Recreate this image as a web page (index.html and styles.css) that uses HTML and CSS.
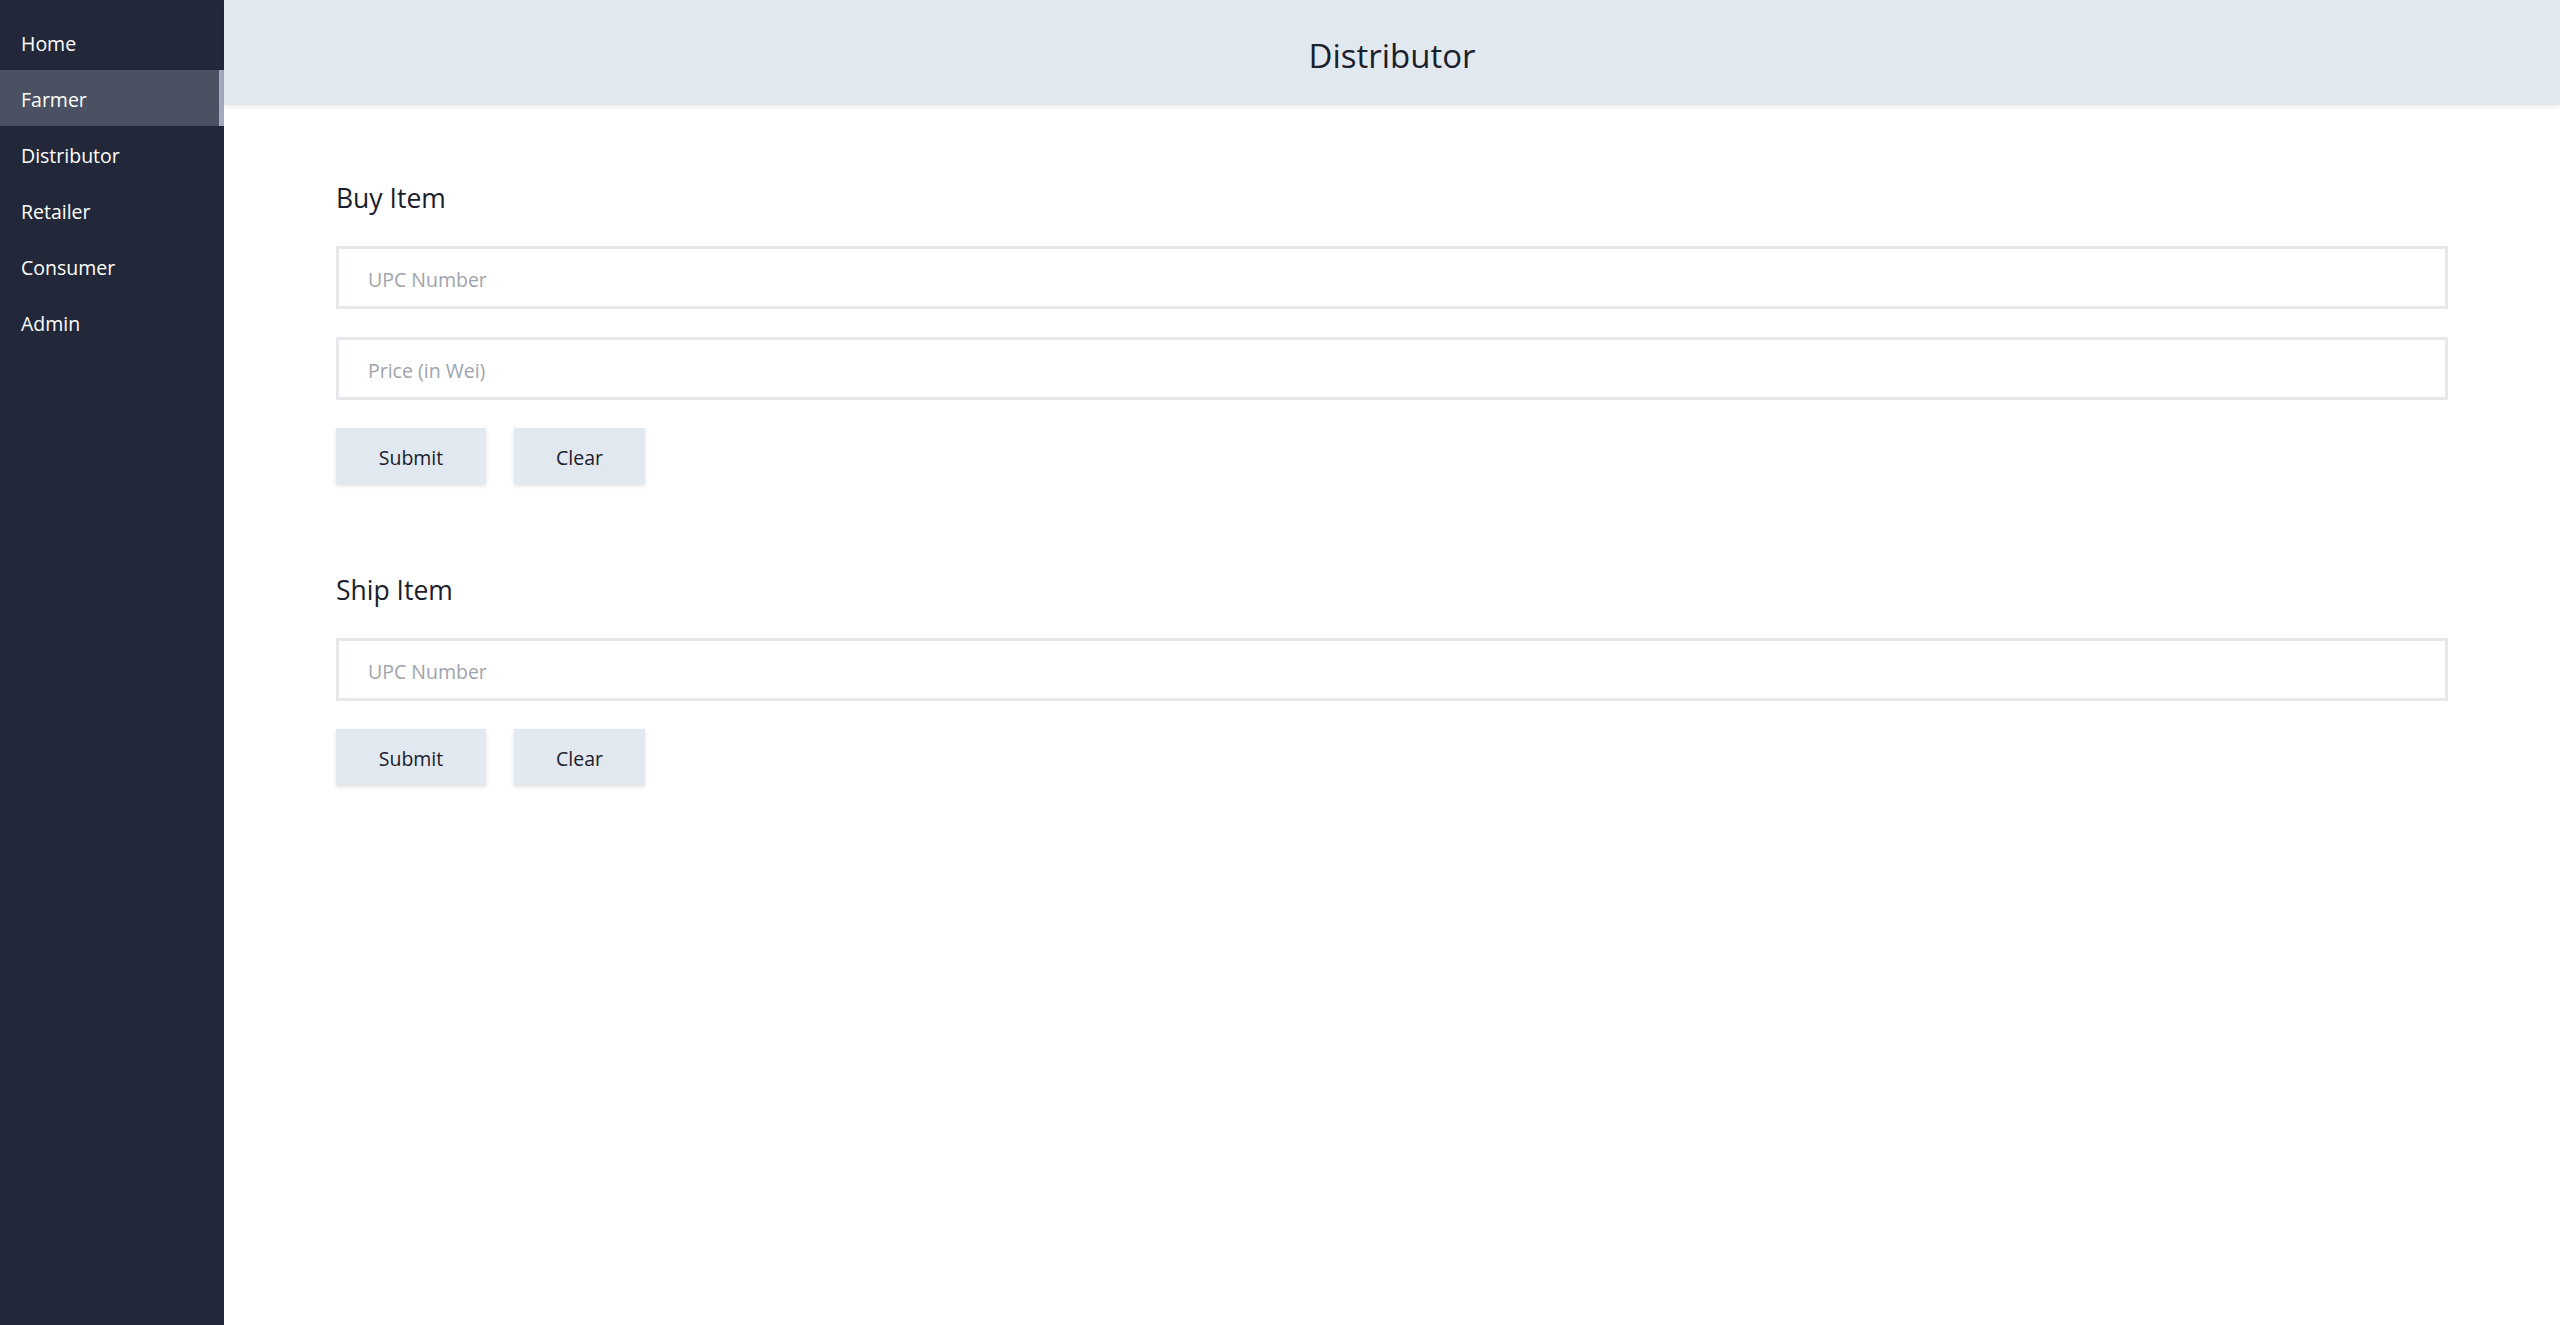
FILE: index.html
```html
<!DOCTYPE html>
<html>
<head>
<meta charset="utf-8">
<title>Distributor</title>
<link rel="stylesheet" href="styles.css">
</head>
<body>
<div class="app">
  <nav class="sidebar">
    <a class="nav-item">Home</a>
    <a class="nav-item active">Farmer</a>
    <a class="nav-item">Distributor</a>
    <a class="nav-item">Retailer</a>
    <a class="nav-item">Consumer</a>
    <a class="nav-item">Admin</a>
  </nav>
  <div class="main">
    <header class="topbar"><h1 class="title">Distributor</h1></header>
    <div class="content">
      <section class="form-section">
        <h2 class="section-title">Buy Item</h2>
        <input class="field" type="text" placeholder="UPC Number">
        <input class="field" type="text" placeholder="Price (in Wei)">
        <div class="actions">
          <button class="btn btn-submit">Submit</button>
          <button class="btn btn-clear">Clear</button>
        </div>
      </section>
      <section class="form-section">
        <h2 class="section-title">Ship Item</h2>
        <input class="field" type="text" placeholder="UPC Number">
        <div class="actions">
          <button class="btn btn-submit">Submit</button>
          <button class="btn btn-clear">Clear</button>
        </div>
      </section>
    </div>
  </div>
</div>
</body>
</html>
```

FILE: styles.css
```css
* { box-sizing: border-box; }
html, body { margin: 0; padding: 0; height: 100%; }
body {
  font-family: "Open Sans", "Noto Sans", "Liberation Sans", sans-serif;
  color: #1a202c;
  background: #ffffff;
}
.app {
  display: flex;
  min-height: 100vh;
}
.sidebar {
  width: 224px;
  flex: 0 0 224px;
  background: #222839;
  padding-top: 14px;
  display: flex;
  flex-direction: column;
}
.nav-item {
  display: flex;
  align-items: center;
  height: 56px;
  padding-left: 21px;
  padding-top: 3px;
  color: #ffffff;
  font-size: 19.5px;
  text-decoration: none;
}
.nav-item.active {
  background: #495163;
  border-right: 5px solid #a3aabd;
}
.main {
  flex: 1;
  display: flex;
  flex-direction: column;
}
.topbar {
  height: 105px;
  background: #e2e8f0;
  display: flex;
  align-items: center;
  justify-content: center;
  box-shadow: 0 2px 4px rgba(0,0,0,0.08);
  position: relative;
  z-index: 1;
}
.title {
  margin: 0;
  font-size: 33px;
  font-weight: 400;
  color: #1a202c;
  line-height: 1;
  padding-top: 5px;
}
.content {
  padding: 75px 112px 0 112px;
  display: flex;
  flex-direction: column;
  gap: 88px;
}
.form-section {
  display: flex;
  flex-direction: column;
  gap: 28px;
}
.section-title {
  margin: 0;
  font-size: 26.5px;
  font-weight: 400;
  line-height: 36px;
  padding-bottom: 2px;
  color: #1a202c;
}
.field {
  display: block;
  width: 100%;
  height: 63px;
  border: 3px solid #e5e7eb;
  padding: 3px 29px 0 29px;
  font-family: inherit;
  font-size: 19.5px;
  color: #1a202c;
  outline: none;
  background: #fff;
}
.field::placeholder { color: #a0a4ad; }
.actions {
  display: flex;
  gap: 28px;
}
.btn {
  height: 56px;
  padding: 3px 0 0 0;
  border: none;
  background: #e2e8f0;
  font-family: inherit;
  font-size: 19.5px;
  color: #1a202c;
  box-shadow: 0 2px 4px rgba(0,0,0,0.12);
  cursor: pointer;
}
.btn-submit { width: 150px; }
.btn-clear { width: 131px; }
```
